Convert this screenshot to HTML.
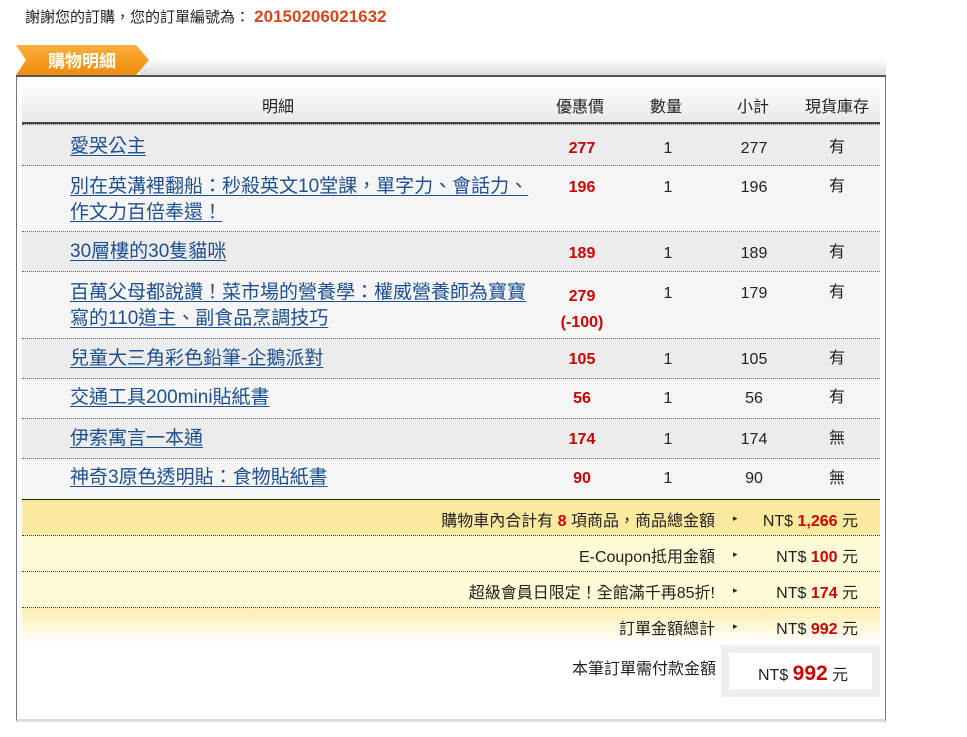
<!DOCTYPE html>
<html><head><meta charset="utf-8"><style>
*{margin:0;padding:0;box-sizing:border-box}
body{width:967px;height:737px;background:#fff;font-family:"Liberation Sans","Noto Sans CJK TC",sans-serif;color:#222;position:relative;overflow:hidden}
.a{position:absolute}
.row{position:absolute;left:22px;width:858px;border-bottom:1px dotted #666}
.lk{position:absolute;left:48px;color:#1d4f91;font-size:19px;line-height:26px;text-decoration:underline;text-underline-offset:3px;width:462px}
.c{position:absolute;text-align:center;font-size:16px;line-height:20px}
.p{left:530px;width:60px;color:#c00;font-weight:bold}
.q{left:616px;width:60px}
.s{left:702px;width:60px}
.k{left:785px;width:60px}
.sm{position:absolute;left:22px;width:858px;border-bottom:1px dotted #444;font-size:16px}
.sm .l{position:absolute;right:165px;top:0;white-space:nowrap}
.sm .ar{position:absolute;left:711px;font-size:9px}
.sm .v{position:absolute;right:22px;white-space:nowrap}
.r{color:#c00;font-weight:bold}
</style></head><body>
<div class="a" style="left:25px;top:6px;font-size:15px">謝謝您的訂購，您的訂單編號為： <span style="color:#d5471a;font-weight:bold;font-size:17px">20150206021632</span></div>
<div class="a" style="left:140px;top:58px;width:746px;height:17px;background:linear-gradient(#fff,#ddd)"></div>
<div class="a" style="left:16px;top:75px;width:870px;height:2px;background:#555"></div>
<svg class="a" style="left:16px;top:45px" width="134" height="31"><defs><linearGradient id="g" x1="0" y1="0" x2="0" y2="1"><stop offset="0" stop-color="#fbb03b"/><stop offset="1" stop-color="#f08a0c"/></linearGradient></defs><path d="M0 0H120L133 15L120 30H0L10 15Z" fill="url(#g)"/></svg>
<div class="a" style="left:48px;top:47px;color:#fff;font-weight:bold;font-size:17px">購物明細</div>
<div class="a" style="left:16px;top:77px;width:870px;height:645px;border:1px solid #777;border-top:none;border-bottom:3px solid #ddd"></div>
<div class="a" style="left:22px;top:80px;width:858px;height:42px;background:linear-gradient(#fff,#e8e8e8);font-size:16px">
<span class="a" style="left:240px;top:13px">明細</span><span class="a" style="left:534px;top:13px">優惠價</span><span class="a" style="left:628px;top:13px">數量</span><span class="a" style="left:715px;top:13px">小計</span><span class="a" style="left:783px;top:13px">現貨庫存</span></div>
<div class="a" style="left:22px;top:122px;width:858px;height:2px;background:#444"></div>
<div class="row" style="top:124px;height:42px;background:#ececec;border-top:1px dotted #666"><div class="lk" style="top:9px">愛哭公主</div><div class="c p" style="top:14px">277</div><div class="c q" style="top:14px">1</div><div class="c s" style="top:14px">277</div><div class="c k" style="top:13px">有</div></div>
<div class="row" style="top:166px;height:66px;background:#f5f5f5"><div class="lk" style="top:8px">別在英溝裡翻船：秒殺英文10堂課，單字力、會話力、作文力百倍奉還！</div><div class="c p" style="top:12px">196</div><div class="c q" style="top:12px">1</div><div class="c s" style="top:12px">196</div><div class="c k" style="top:11px">有</div></div>
<div class="row" style="top:232px;height:40px;background:#ececec"><div class="lk" style="top:7px">30層樓的30隻貓咪</div><div class="c p" style="top:12px">189</div><div class="c q" style="top:12px">1</div><div class="c s" style="top:12px">189</div><div class="c k" style="top:11px">有</div></div>
<div class="row" style="top:272px;height:67px;background:#f5f5f5"><div class="lk" style="top:8px">百萬父母都說讚！菜市場的營養學：權威營養師為寶寶寫的110道主、副食品烹調技巧</div><div class="c p" style="top:12px;line-height:26px">279<br>(-100)</div><div class="c q" style="top:12px">1</div><div class="c s" style="top:12px">179</div><div class="c k" style="top:11px">有</div></div>
<div class="row" style="top:339px;height:40px;background:#ececec"><div class="lk" style="top:7px">兒童大三角彩色鉛筆-企鵝派對</div><div class="c p" style="top:11px">105</div><div class="c q" style="top:11px">1</div><div class="c s" style="top:11px">105</div><div class="c k" style="top:10px">有</div></div>
<div class="row" style="top:379px;height:40px;background:#f5f5f5"><div class="lk" style="top:6px">交通工具200mini貼紙書</div><div class="c p" style="top:10px">56</div><div class="c q" style="top:10px">1</div><div class="c s" style="top:10px">56</div><div class="c k" style="top:9px">有</div></div>
<div class="row" style="top:419px;height:40px;background:#ececec"><div class="lk" style="top:7px">伊索寓言一本通</div><div class="c p" style="top:11px">174</div><div class="c q" style="top:11px">1</div><div class="c s" style="top:11px">174</div><div class="c k" style="top:10px">無</div></div>
<div class="row" style="top:459px;height:40px;background:#f5f5f5;border-bottom:none"><div class="lk" style="top:6px">神奇3原色透明貼：食物貼紙書</div><div class="c p" style="top:10px">90</div><div class="c q" style="top:10px">1</div><div class="c s" style="top:10px">90</div><div class="c k" style="top:10px">無</div></div>
<div class="a" style="left:22px;top:499px;width:858px;height:1px;background:#222"></div>
<div class="sm" style="top:500px;height:36px;background:#fbe9a0"><span class="l" style="top:7px">購物車內合計有 <span class="r">8</span> 項商品，商品總金額</span><span class="ar" style="top:13px">▸</span><span class="v" style="top:7px">NT$ <span class="r">1,266</span> 元</span></div>
<div class="sm" style="top:536px;height:36px;background:#fffbd6"><span class="l" style="top:7px">E-Coupon抵用金額</span><span class="ar" style="top:13px">▸</span><span class="v" style="top:7px">NT$ <span class="r">100</span> 元</span></div>
<div class="sm" style="top:572px;height:36px;background:#fffbd6"><span class="l" style="top:7px">超級會員日限定！全館滿千再85折!</span><span class="ar" style="top:13px">▸</span><span class="v" style="top:7px">NT$ <span class="r">174</span> 元</span></div>
<div class="sm" style="top:608px;height:37px;border-bottom:none;background:linear-gradient(#fdeeb0,#fff)"><span class="l" style="top:7px">訂單金額總計</span><span class="ar" style="top:13px">▸</span><span class="v" style="top:7px">NT$ <span class="r">992</span> 元</span></div>
<div class="a" style="left:572px;top:655px;font-size:16px">本筆訂單需付款金額</div>
<div class="a" style="left:721px;top:645px;width:159px;height:52px;border:8px solid #eee;background:#fff;font-size:16px;padding:8px 0 0 29px">NT$ <span style="color:#c00;font-weight:bold;font-size:21px">992</span> 元</div>
</body></html>
